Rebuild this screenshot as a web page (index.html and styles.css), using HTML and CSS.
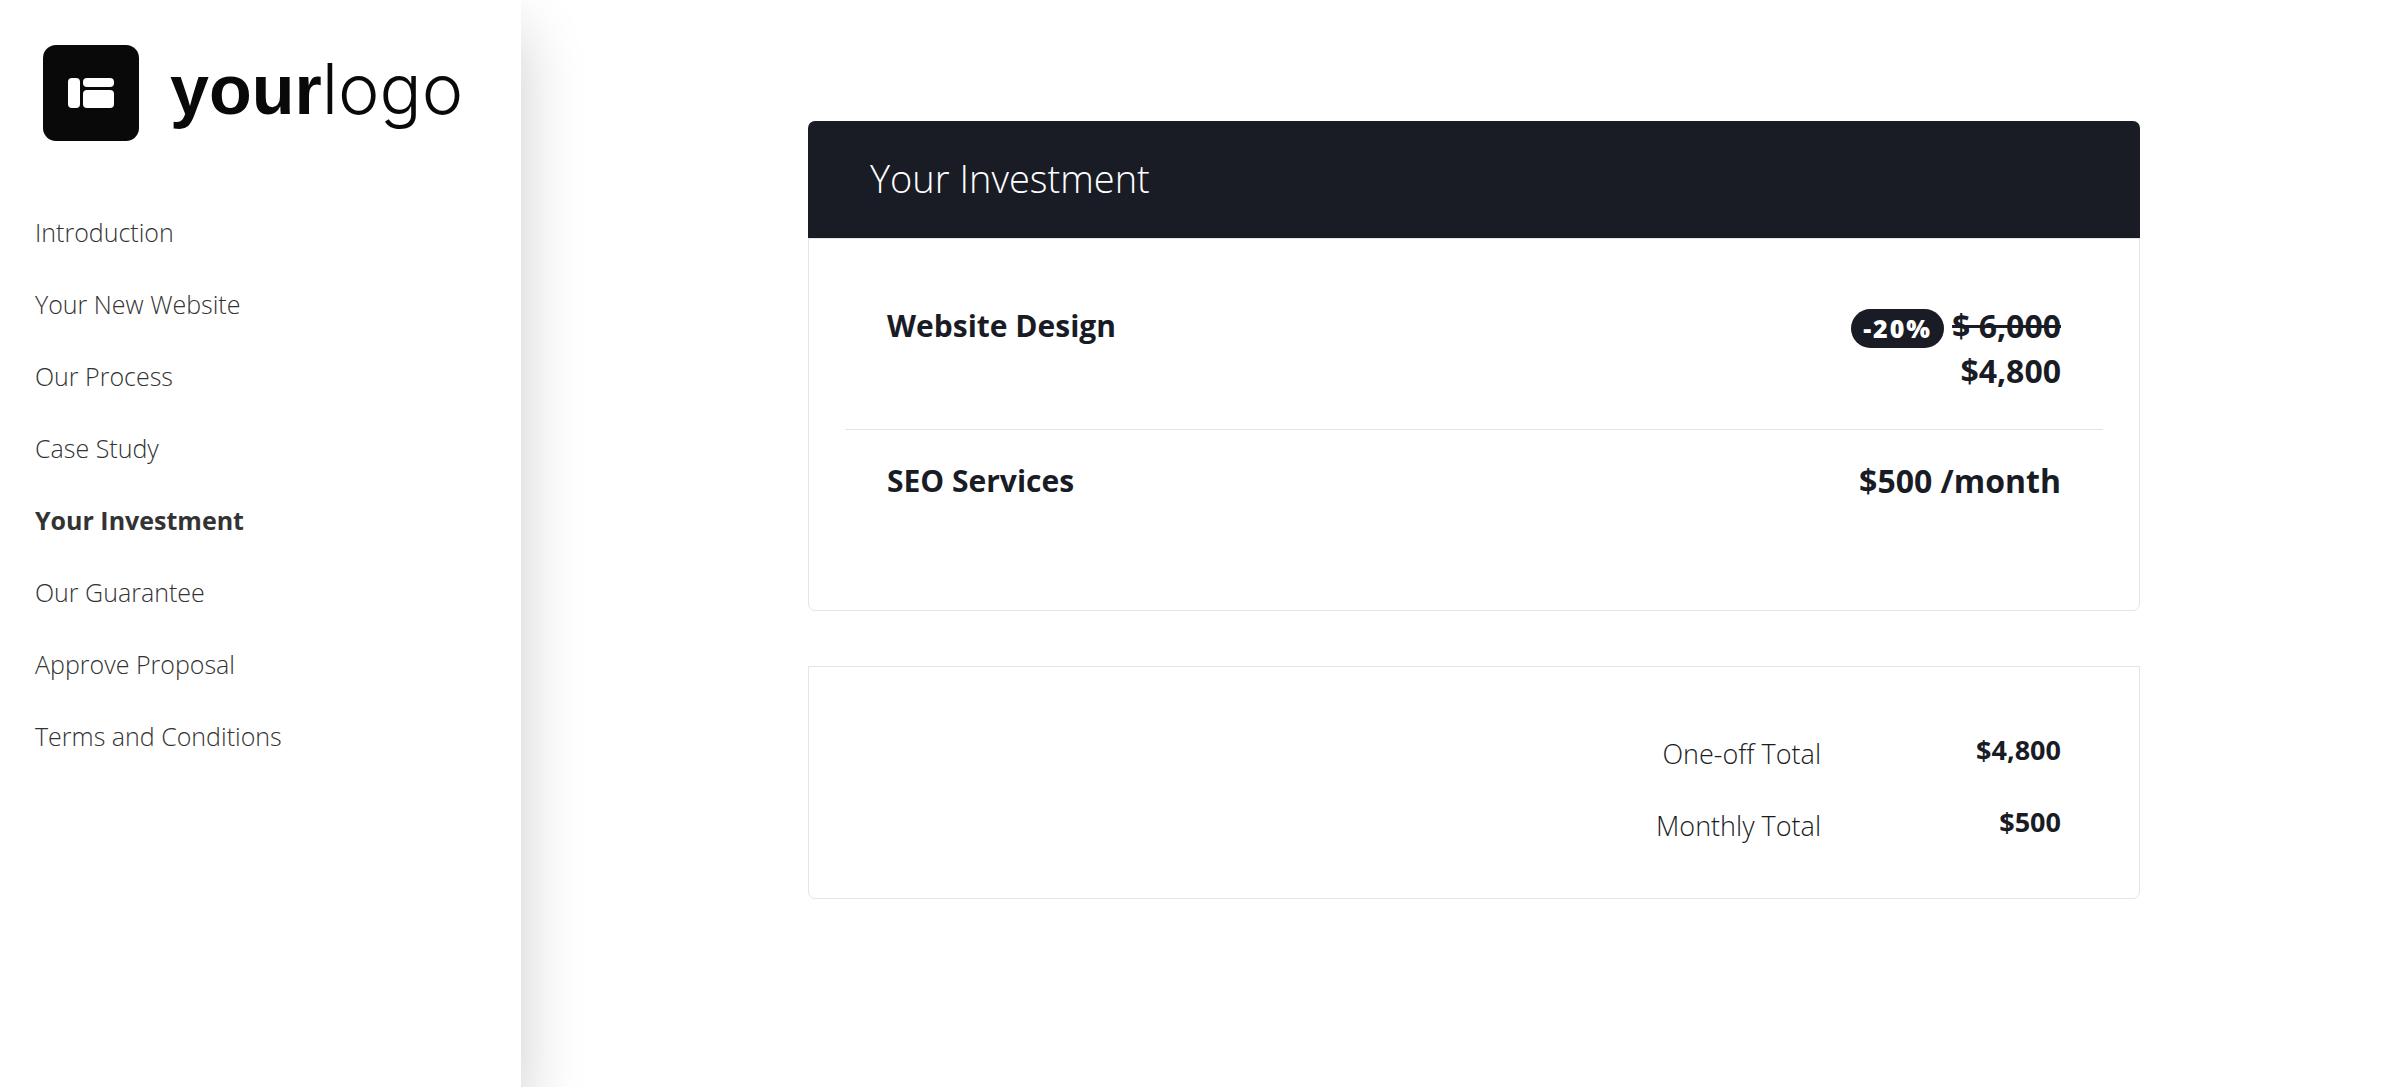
FILE: index.html
```html
<!DOCTYPE html>
<html lang="en">
<head>
    <meta charset="UTF-8">
    <meta name="viewport" content="width=device-width, initial-scale=1.0">
    <title>Your Investment</title>
    <link rel="stylesheet" href="styles.css">
</head>
<body>
    <aside class="sidebar">
        <a class="logo" href="#">
            <svg class="logo-mark" viewBox="0 0 96 96" aria-hidden="true">
                <rect width="96" height="96" rx="13" fill="#090909"/>
                <g fill="#fff">
                    <rect x="25" y="33" width="12" height="30" rx="4"/>
                    <rect x="40" y="33" width="31" height="9" rx="4"/>
                    <rect x="40" y="45" width="31" height="18" rx="4"/>
                </g>
            </svg>
            <span class="logo-text"><b>your</b><span class="logo-light">logo</span></span>
        </a>
        <nav class="side-nav">
            <a href="#">Introduction</a>
            <a href="#">Your New Website</a>
            <a href="#">Our Process</a>
            <a href="#">Case Study</a>
            <a href="#" class="active">Your Investment</a>
            <a href="#">Our Guarantee</a>
            <a href="#">Approve Proposal</a>
            <a href="#">Terms and Conditions</a>
        </nav>
    </aside>
    <main class="content">
        <section class="card">
            <h1 class="card-header">Your Investment</h1>
            <div class="card-body">
                <div class="item">
                    <h2>Website Design</h2>
                    <div class="price">
                        <div class="discount"><span class="badge">-20%</span><s>$ 6,000</s></div>
                        <div>$4,800</div>
                    </div>
                </div>
                <div class="item">
                    <h2>SEO Services</h2>
                    <div class="price">$500 /month</div>
                </div>
            </div>
        </section>
        <section class="totals">
            <table class="totals-table">
                <tr>
                    <th scope="row">One-off Total</th>
                    <td>$4,800</td>
                </tr>
                <tr>
                    <th scope="row">Monthly Total</th>
                    <td>$500</td>
                </tr>
            </table>
        </section>
    </main>
</body>
</html>
```
FILE: styles.css
```css
* {
    box-sizing: border-box;
}
body {
    font-family: "Open Sans", sans-serif;
    margin: 0;
    background-color: #fff;
    color: #1a1c25;
    min-height: 100vh;
    display: flex;
}
.sidebar {
    flex: 0 0 521px;
    padding: 45px 35px;
    background-color: #fff;
    box-shadow: 0 30px 60px rgba(0, 0, 0, 0.2);
}
.logo {
    display: flex;
    align-items: flex-start;
    gap: 31px;
    padding-left: 8px;
    color: #090909;
    text-decoration: none;
}
.logo-mark {
    width: 96px;
    height: 96px;
}
.logo-text {
    font-family: "Liberation Sans", Arial, sans-serif;
    font-size: 70px;
    line-height: 90px;
}
.logo-light {
    font-family: Inter, sans-serif;
    font-size: 70px;
    font-weight: 300;
    line-height: 1;
}
.side-nav {
    display: flex;
    flex-direction: column;
    margin-top: 55px;
}
.side-nav a {
    color: #333;
    font-size: 25px;
    font-weight: 300;
    line-height: 72px;
    text-decoration: none;
}
.side-nav .active {
    font-weight: 700;
}
.content {
    flex: 1;
    padding: 121px 30px 121px 50px;
}
.card, .totals {
    max-width: 1332px;
    margin: 0 auto;
}
.card-header {
    margin: 0;
    padding: 31px 62px 34px;
    background-color: #1a1c25;
    color: #fff;
    font-size: 38px;
    font-weight: 300;
    line-height: 52px;
    border-radius: 7px 7px 0 0;
}
.card-body {
    padding: 54px 36px 79px;
    border: 1px solid #e4e4e6;
    border-radius: 0 0 7px 7px;
}
.item {
    display: flex;
    justify-content: space-between;
    padding: 10px 42px 36px;
}
.item + .item {
    border-top: 1px solid #e4e4e6;
    padding: 28px 42px;
}
.item h2 {
    margin: 0;
    font-size: 30px;
    font-weight: 700;
    line-height: 45px;
}
.price {
    font-size: 32px;
    font-weight: 700;
    line-height: 45px;
    text-align: right;
}
.discount {
    display: flex;
    align-items: center;
    gap: 8px;
}
.badge {
    margin-top: 6px;
    padding: 0 12px;
    border-radius: 20px;
    background-color: #1a1c25;
    color: #fff;
    font-size: 25px;
    font-weight: 800;
    line-height: 39px;
    letter-spacing: 2px;
}
.totals {
    display: flex;
    justify-content: flex-end;
    margin-top: 55px;
    padding: 49px 78px 38px;
    border: 1px solid #e4e4e6;
    border-radius: 0 0 7px 7px;
}
.totals-table {
    border-collapse: collapse;
    font-size: 27px;
    line-height: 38px;
    text-align: right;
}
.totals-table th {
    padding: 19px 0 15px;
    font-weight: 300;
    text-align: right;
}
.totals-table td {
    width: 240px;
    padding: 15px 0 19px;
    font-weight: 700;
}
```
